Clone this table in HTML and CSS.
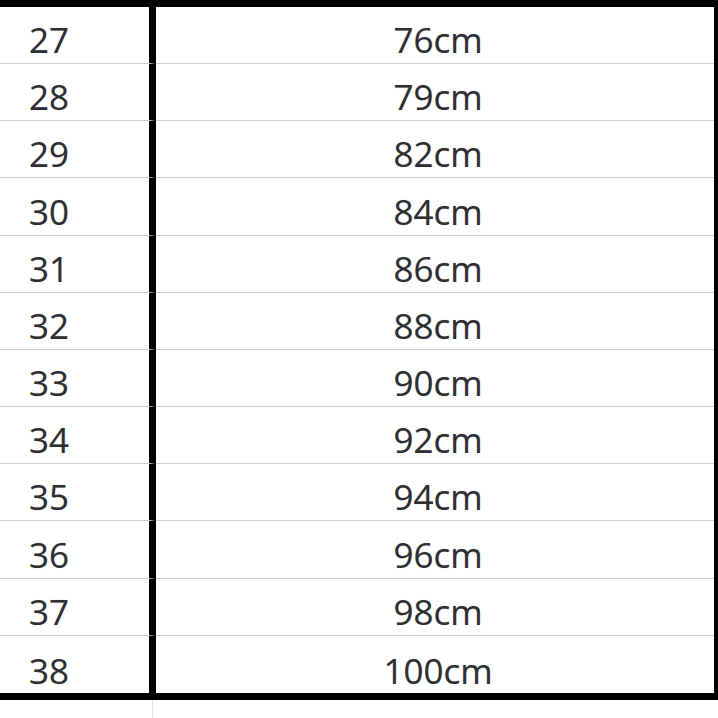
FILE: index.html
```html
<!DOCTYPE html>
<html>
<head>
<meta charset="utf-8">
<link rel="stylesheet" href="styles.css">
</head>
<body>
<div class="sheet">
  <div class="table">
    <div class="size">27</div><div class="len">76cm</div>
    <div class="size">28</div><div class="len">79cm</div>
    <div class="size">29</div><div class="len">82cm</div>
    <div class="size">30</div><div class="len">84cm</div>
    <div class="size">31</div><div class="len">86cm</div>
    <div class="size">32</div><div class="len">88cm</div>
    <div class="size">33</div><div class="len">90cm</div>
    <div class="size">34</div><div class="len">92cm</div>
    <div class="size">35</div><div class="len">94cm</div>
    <div class="size">36</div><div class="len">96cm</div>
    <div class="size">37</div><div class="len">98cm</div>
    <div class="size last">38</div><div class="len last">100cm</div>
  </div>
  <div class="below"><div class="gridline"></div></div>
</div>
</body>
</html>
```

FILE: styles.css
```css
html, body {
  margin: 0;
  padding: 0;
  background: #ffffff;
}

.sheet {
  width: 718px;
  height: 718px;
  overflow: hidden;
  font-family: "Open Sans", "Liberation Sans", sans-serif;
  color: #2f2f33;
}

.table {
  display: grid;
  grid-template-columns: 156px 1fr;
  grid-auto-rows: 57.1667px;
  border-top: 7px solid #000;
  border-bottom: 7px solid #000;
  border-right: 4px solid #000;
  box-sizing: border-box;
  width: 718px;
  height: 700px;
}

.size,
.len {
  display: flex;
  align-items: flex-end;
  font-size: 35px;
  line-height: 1;
  padding-bottom: 6px;
  box-sizing: border-box;
  border-bottom: 1px solid #cfcfcf;
  text-shadow: 0 0 1px rgba(40, 40, 50, 0.35);
}

.size {
  padding-left: 29px;
  border-right: 7px solid #000;
}

.len {
  justify-content: center;
  padding-left: 6px;
}

.last {
  border-bottom: none;
  padding-bottom: 5px;
}

.below {
  height: 18px;
}

.gridline {
  margin-left: 152px;
  width: 1px;
  height: 18px;
  background: #e2e2e2;
}
```
